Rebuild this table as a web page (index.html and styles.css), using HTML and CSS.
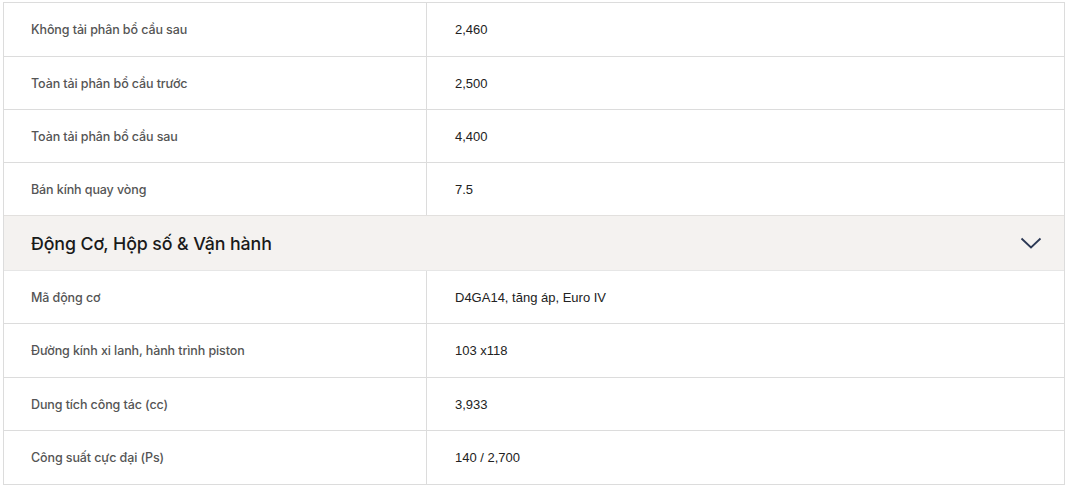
FILE: index.html
```html
<!DOCTYPE html>
<html lang="vi">
<head>
<meta charset="utf-8">
<link rel="stylesheet" href="styles.css">
</head>
<body>
<div class="spec">
  <div class="row row-first"><div class="label">Không tải phân bổ cầu sau</div><div class="value">2,460</div></div>
  <div class="row"><div class="label">Toàn tải phân bổ cầu trước</div><div class="value">2,500</div></div>
  <div class="row"><div class="label">Toàn tải phân bổ cầu sau</div><div class="value">4,400</div></div>
  <div class="row"><div class="label">Bán kính quay vòng</div><div class="value">7.5</div></div>
  <div class="section">
    <h3 class="section-title">Động Cơ, Hộp số &amp; Vận hành</h3>
    <svg class="chevron" width="22" height="14" viewBox="0 0 22 14"><path d="M1.5 2.5 L11 11.5 L20.5 2.5" fill="none" stroke="#2b3854" stroke-width="1.8"/></svg>
  </div>
  <div class="row"><div class="label">Mã động cơ</div><div class="value">D4GA14, tăng áp, Euro IV</div></div>
  <div class="row row-tall"><div class="label">Đường kính xi lanh, hành trình piston</div><div class="value">103 x118</div></div>
  <div class="row"><div class="label">Dung tích công tác (cc)</div><div class="value">3,933</div></div>
  <div class="row row-tall"><div class="label">Công suất cực đại (Ps)</div><div class="value">140 / 2,700</div></div>
</div>
</body>
</html>
```
FILE: styles.css
```css
html, body { margin: 0; padding: 0; background: #fff; }
body { font-family: "Liberation Sans", Arial, sans-serif; }
.spec {
  margin: 2px 3px 0 3px;
  border-left: 1px solid #dcdcdc;
  border-right: 1px solid #dcdcdc;
  border-top: 1px solid #dcdcdc;
}
.row {
  display: grid;
  grid-template-columns: 423px 1fr;
  height: 52px;
  border-bottom: 1px solid #dcdcdc;
}
.row-first, .row-tall { height: 53px; }
.label {
  display: flex; align-items: center;
  padding-left: 27px;
  border-right: 1px solid #dcdcdc;
  font-family: "Inter", sans-serif;
  font-weight: 500;
  font-size: 12.5px;
  color: #555;
  letter-spacing: -0.1px;
}
.value {
  display: flex; align-items: center;
  padding-left: 28px;
  font-size: 13px;
  color: #222;
}
.section {
  display: flex; align-items: center; justify-content: space-between;
  height: 54px;
  background: #f4f2f0;
  border-top: 1px solid #e2e0de;
  border-bottom: 1px solid #e6e6e6;
  padding: 0 22px 0 27px;
  margin-top: -1px;
}
.section-title {
  margin: 0;
  font-family: "Inter", sans-serif;
  font-weight: 500;
  font-size: 17.8px;
  letter-spacing: -0.1px;
  color: #1a1a1a;
}
.chevron { display: block; }
```
